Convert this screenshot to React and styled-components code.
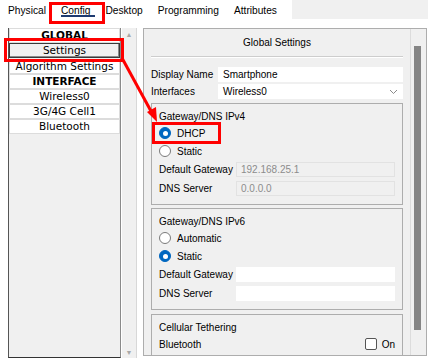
import React from 'react';
import styled, { createGlobalStyle } from 'styled-components';

const GlobalStyle = createGlobalStyle`
  html, body {
    margin: 0;
    padding: 0;
    background: #fff;
  }
`

const Frame = styled.div`
  width: 428px;
  height: 359px;
  position: relative;
  overflow: hidden;
  background: #fff;
  font-family: "Liberation Sans", Arial, sans-serif;
  font-size: 10px;
  color: #000;
`

const TabBar = styled.div`
  display: flex;
  height: 19px;
`

const Tabs = styled.div`
  display: flex;
  background: #fff;
  padding-left: 0.5px;
  padding-right: 8px;
`

const Tab = styled.div`
  position: relative;
  padding: 0 7.5px;
  line-height: 21px;
  font-size: 10.2px;
  white-space: nowrap;
  &::after {
    content: '';
    display: ${p => (p.active ? 'block' : 'none')};
    position: absolute;
    left: 8px;
    right: 3px;
    top: 15px;
    height: 2px;
    background: #1d3a70;
  }
`

const TabFill = styled.div`
  flex: 1;
  background: #f0f0f0;
`

const Body = styled.div`
  display: flex;
  padding: 9px 0 0 8px;
`

const ListBox = styled.div`
  width: 113px;
  height: 330px;
  box-sizing: border-box;
  border: 1px solid #555;
  border-right-color: #8a8a8a;
  border-bottom-color: #333;
  border-top: none;
  background: #f0f0f0;
  font-family: "DejaVu Sans", Verdana, sans-serif;
  font-size: 10.5px;
`

const ListRow = styled.div`
  height: 15px;
  box-sizing: border-box;
  line-height: 13px;
  text-align: center;
  white-space: nowrap;
  overflow: hidden;
  background: ${p => (p.selected ? '#f0f0f0' : '#fff')};
  border: 1px solid ${p => (p.selected ? '#3a3a3a' : '#dcdcdc')};
  box-shadow: ${p => (p.selected ? 'inset -1px -1px #8a8a8a' : 'none')};
  font-weight: ${p => (p.header ? 'bold' : 'normal')};
  margin-bottom: ${p => (p.selected ? '1px' : '0')};
`

const ListScroll = styled.div`
  width: 15px;
  height: 330px;
  margin-left: 1px;
  box-sizing: border-box;
  border-right: 1px solid #d8d8d8;
  background: #f0f0f0;
  display: flex;
  flex-direction: column;
  justify-content: space-between;
  align-items: center;
  color: #a8a8a8;
  font-size: 7px;
  padding: 3px 0 2px;
`

const Panel = styled.div`
  margin-left: 6px;
  width: 284px;
  height: 328px;
  box-sizing: border-box;
  border: 1px solid #adadad;
  background: #f0f0f0;
  display: flex;
  overflow: hidden;
`

const Content = styled.div`
  flex: 1;
  padding: 0 7px;
`

const PanelScroll = styled.div`
  width: 16px;
  border-left: 1px solid #dcdcdc;
  box-sizing: border-box;
  padding: 17px 0 0 3px;
`

const Thumb = styled.div`
  width: 7px;
  height: 284px;
  background: #858585;
`

const Title = styled.div`
  height: 27px;
  line-height: 27px;
  text-align: center;
  border-bottom: 1px solid #cdcdcd;
  box-shadow: 0 1px 0 #fff;
`

const FormRows = styled.div`
  margin-top: 9px;
`

const FormRow = styled.div`
  display: flex;
  align-items: center;
  height: 17px;
`

const Label = styled.div`
  width: ${p => p.width}px;
  flex-shrink: 0;
  white-space: nowrap;
`

const Field = styled.div`
  flex: 1;
  height: 15px;
  box-sizing: border-box;
  line-height: 15px;
  padding: 0 4px;
  background: ${p => (p.disabled ? '#f0f0f0' : '#fff')};
  border: 1px solid ${p => (p.disabled ? '#e2e2e2' : '#fff')};
  color: ${p => (p.disabled ? '#8c8c8c' : '#000')};
  display: flex;
  align-items: center;
  justify-content: space-between;
`

const Group = styled.div`
  margin-top: ${p => p.gap}px;
  border: 1px solid #adadad;
  padding: 6px 7px 6px;
`

const GroupTitle = styled.div`
  height: 14px;
  line-height: 14px;
`

const RadioRow = styled.div`
  display: flex;
  align-items: center;
  height: 18px;
  gap: 6px;
`

const Radio = styled.span`
  width: 12px;
  height: 12px;
  box-sizing: border-box;
  border-radius: 50%;
  flex-shrink: 0;
  background: ${p => (p.checked ? '#0067c0' : '#fff')};
  border: 1px solid ${p => (p.checked ? '#0067c0' : '#7a7a7a')};
  display: flex;
  align-items: center;
  justify-content: center;
  &::after {
    content: '';
    display: ${p => (p.checked ? 'block' : 'none')};
    width: 5px;
    height: 5px;
    border-radius: 50%;
    background: #fff;
  }
`

const InputRow = styled.div`
  display: flex;
  align-items: center;
  height: 19px;
`

const TetherRow = styled.div`
  display: flex;
  align-items: center;
  height: 18px;
`

const Check = styled.span`
  width: 12px;
  height: 12px;
  box-sizing: border-box;
  border: 1px solid #555;
  border-radius: 2px;
  background: #fff;
  margin: 0 5px 0 auto;
`

const Highlight = styled.div`
  position: absolute;
  left: ${p => p.x}px;
  top: ${p => p.y}px;
  width: ${p => p.w}px;
  height: ${p => p.h}px;
  box-sizing: border-box;
  border: 3px solid #f00;
  pointer-events: none;
`

const ArrowLayer = styled.svg`
  position: absolute;
  left: 0;
  top: 0;
  pointer-events: none;
`

const Chevron = () => (
  <svg width="9" height="6" viewBox="0 0 9 6">
    <path d="M1 1 L4.5 4.5 L8 1" fill="none" stroke="#8a8a8a" strokeWidth="1" />
  </svg>
)

const tabs = ['Physical', 'Config', 'Desktop', 'Programming', 'Attributes'];
const listItems = [
  { label: 'GLOBAL', header: true },
  { label: 'Settings', selected: true },
  { label: 'Algorithm Settings' },
  { label: 'INTERFACE', header: true },
  { label: 'Wireless0' },
  { label: '3G/4G Cell1' },
  { label: 'Bluetooth' },
];

const App = () => {
  return (
    <Frame>
      <GlobalStyle />
      <TabBar>
        <Tabs>
          {tabs.map(t => (
            <Tab key={t} active={t === 'Config'}>{t}</Tab>
          ))}
        </Tabs>
        <TabFill />
      </TabBar>

      <Body>
        <ListBox>
          {listItems.map(item => (
            <ListRow key={item.label} header={item.header} selected={item.selected}>
              {item.label}
            </ListRow>
          ))}
        </ListBox>
        <ListScroll>
          <span>▲</span>
          <span>▼</span>
        </ListScroll>

        <Panel>
          <Content>
            <Title>Global Settings</Title>
            <FormRows>
              <FormRow>
                <Label width={67}>Display Name</Label>
                <Field>Smartphone</Field>
              </FormRow>
              <FormRow>
                <Label width={67}>Interfaces</Label>
                <Field>Wireless0<Chevron /></Field>
              </FormRow>
            </FormRows>

            <Group gap={3}>
              <GroupTitle>Gateway/DNS IPv4</GroupTitle>
              <RadioRow><Radio checked />DHCP</RadioRow>
              <RadioRow><Radio />Static</RadioRow>
              <InputRow>
                <Label width={77}>Default Gateway</Label>
                <Field disabled>192.168.25.1</Field>
              </InputRow>
              <InputRow>
                <Label width={77}>DNS Server</Label>
                <Field disabled>0.0.0.0</Field>
              </InputRow>
            </Group>

            <Group gap={3}>
              <GroupTitle>Gateway/DNS IPv6</GroupTitle>
              <RadioRow><Radio />Automatic</RadioRow>
              <RadioRow><Radio checked />Static</RadioRow>
              <InputRow>
                <Label width={77}>Default Gateway</Label>
                <Field />
              </InputRow>
              <InputRow>
                <Label width={77}>DNS Server</Label>
                <Field />
              </InputRow>
            </Group>

            <Group gap={4}>
              <GroupTitle>Cellular Tethering</GroupTitle>
              <TetherRow>
                Bluetooth
                <Check />
                On
              </TetherRow>
            </Group>
          </Content>
          <PanelScroll>
            <Thumb />
          </PanelScroll>
        </Panel>
      </Body>

      <Highlight x={49} y={2} w={56} h={22} />
      <Highlight x={4} y={38} w={120} h={24} />
      <Highlight x={152} y={122} w={69} h={22} />
      <ArrowLayer width="428" height="359">
        <line x1="122" y1="58" x2="152" y2="113" stroke="#f00" strokeWidth="3" />
        <polygon points="157,122 147,112 156,107" fill="#f00" />
      </ArrowLayer>
    </Frame>
  );
};

export default App;
